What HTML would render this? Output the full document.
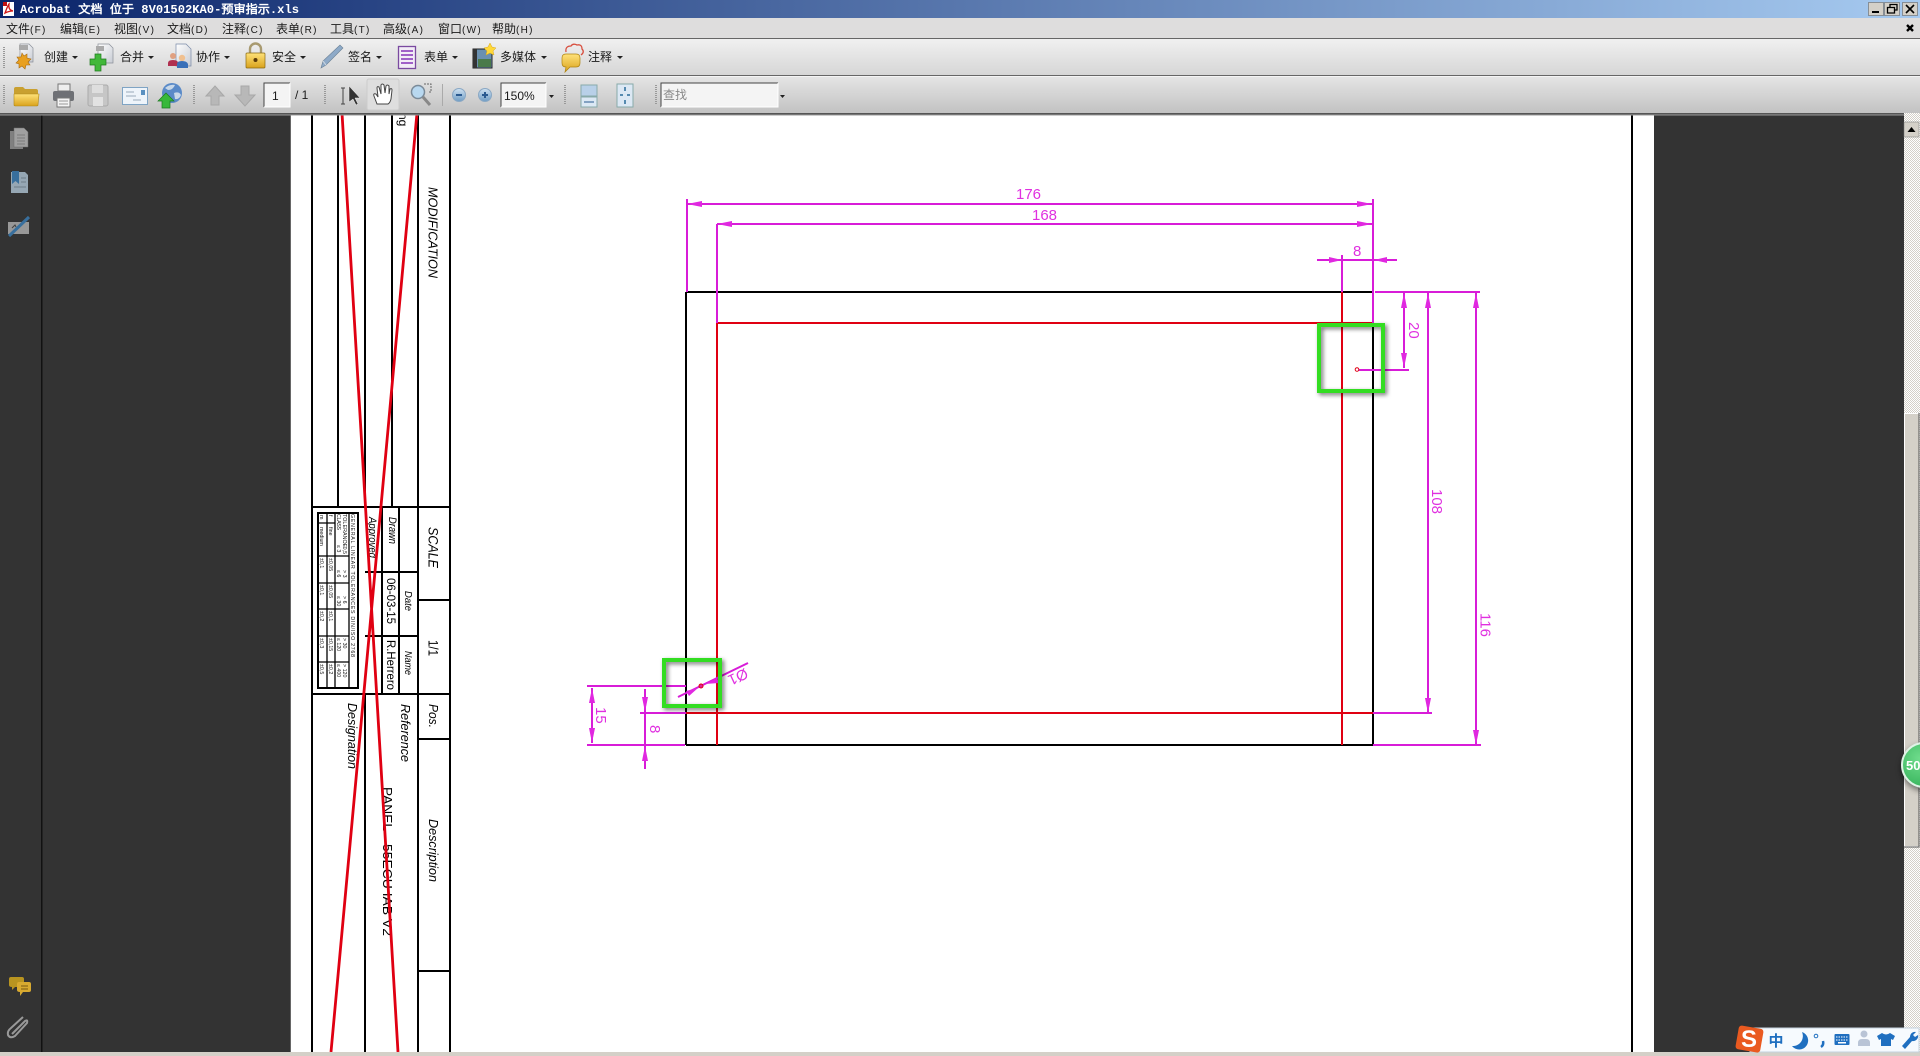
<!DOCTYPE html>
<html lang="zh"><head><meta charset="utf-8"><title>Acrobat</title>
<style>
html,body{margin:0;padding:0;background:#333;overflow:hidden;width:1920px;height:1056px}
svg{display:block;position:absolute;left:0;top:0;filter:blur(.35px)}
.ui{font-family:"Liberation Sans","WenQuanYi Zen Hei","Noto Sans CJK SC",sans-serif;font-size:12px;fill:#1a1a1a}
.ui tspan{font-size:10px;letter-spacing:1.300px}
.d{font-family:"Liberation Sans",sans-serif;fill:#000}
.i{font-style:italic}
.m{font-family:"Liberation Sans",sans-serif;font-size:15px;fill:#e030e0}
.t{font-family:"Liberation Sans",sans-serif;font-size:5.3px;fill:#111}
.gr{stroke:#999;stroke-width:2;stroke-dasharray:1 1}
</style></head><body>
<svg width="1920" height="1056" viewBox="0 0 1920 1056" xmlns="http://www.w3.org/2000/svg">
<defs>
<linearGradient id="tb"><stop offset="0" stop-color="#0a246a"/><stop offset="1" stop-color="#a6caf0"/></linearGradient>
<linearGradient id="t1" x1="0" y1="0" x2="0" y2="1"><stop offset="0" stop-color="#f0f0f0"/><stop offset="1" stop-color="#d6d6d6"/></linearGradient>
<linearGradient id="t2" x1="0" y1="0" x2="0" y2="1"><stop offset="0" stop-color="#e4e4e4"/><stop offset="1" stop-color="#c2c2c2"/></linearGradient>
<linearGradient id="gold" x1="0" y1="0" x2="0" y2="1"><stop offset="0" stop-color="#ffe27a"/><stop offset="1" stop-color="#d9a21c"/></linearGradient>
<linearGradient id="blu" x1="0" y1="0" x2="0" y2="1"><stop offset="0" stop-color="#cfe2f2"/><stop offset="1" stop-color="#6f9cc4"/></linearGradient>
<linearGradient id="page" x1="0" y1="0" x2="1" y2="1"><stop offset="0" stop-color="#fff"/><stop offset="1" stop-color="#c8ccd4"/></linearGradient>
<radialGradient id="ball" cx=".4" cy=".35" r=".8"><stop offset="0" stop-color="#6fdc8c"/><stop offset="1" stop-color="#2fae55"/></radialGradient>
<pattern id="chk" width="2" height="2" patternUnits="userSpaceOnUse"><rect width="2" height="2" fill="#fff"/><rect width="1" height="1" fill="#d4d0c8"/><rect x="1" y="1" width="1" height="1" fill="#d4d0c8"/></pattern>
</defs>

<!-- backgrounds -->
<rect width="1920" height="1056" fill="#333"/>
<rect x="41" y="115" width="1.5" height="937" fill="#111"/>
<rect x="290" y="113" width="1" height="939" fill="#666"/>
<rect x="291" y="113" width="1363" height="939" fill="#fff"/>

<!-- title block lines -->
<g stroke="#000" stroke-width="2" fill="none">
<path d="M312 113V1052M338 113V507M365 113V507M392 113V507M418 113V1052M450 113V1052M365 694V1052M382 507V694M399 507V694"/>
<path d="M312 507H450M312 694H450M365 572H418M365 636H418M418 600H450M418 739H450M418 971H450"/>
<path d="M1632 113V1052"/>
<!-- tolerance table -->
<rect x="318" y="513" width="40" height="175"/>
<path stroke-width="1.3" d="M327 513V688M335 513V688M349 513V688M318 556H349M318 583H349M318 609H349M318 636H349M318 662H349M318 523H335"/>
</g>
<g class="t">
<text transform="translate(351 514) rotate(90)" textLength="143">GENERAL LINEAR TOLERANCES DIN/ISO 2768</text>
<text transform="translate(343 514) rotate(90)" textLength="33">TOLERANCE</text>
<text transform="translate(337 514) rotate(90)" textLength="16">CLASS</text>
<text transform="translate(329 515) rotate(90)">f</text><text transform="translate(329 527) rotate(90)">fine</text>
<text transform="translate(320 515) rotate(90)">m</text><text transform="translate(320 527) rotate(90)">medium</text>
<text transform="translate(343 542) rotate(90)">&gt; 0,5</text><text transform="translate(337 545) rotate(90)">≤ 3</text>
<text transform="translate(343 570) rotate(90)">&gt; 3</text><text transform="translate(337 570) rotate(90)">≤ 6</text>
<text transform="translate(343 596) rotate(90)">&gt; 6</text><text transform="translate(337 596) rotate(90)">≤ 30</text>
<text transform="translate(343 638) rotate(90)">&gt; 30</text><text transform="translate(337 638) rotate(90)">≤ 120</text>
<text transform="translate(343 664) rotate(90)">&gt; 120</text><text transform="translate(337 664) rotate(90)">≤ 400</text>
<text transform="translate(329 558) rotate(90)">±0,05</text><text transform="translate(320 558) rotate(90)">±0,1</text>
<text transform="translate(329 585) rotate(90)">±0,05</text><text transform="translate(320 585) rotate(90)">±0,1</text>
<text transform="translate(329 611) rotate(90)">±0,1</text><text transform="translate(320 611) rotate(90)">±0,2</text>
<text transform="translate(329 638) rotate(90)">±0,15</text><text transform="translate(320 638) rotate(90)">±0,3</text>
<text transform="translate(329 664) rotate(90)">±0,2</text><text transform="translate(320 664) rotate(90)">±0,5</text>
</g>
<g class="d" font-size="12.5">
<text class="i" transform="translate(428.5 187) rotate(90)" textLength="91" lengthAdjust="spacingAndGlyphs">MODIFICATION</text>
<text transform="translate(399 113) rotate(90)" font-size="12">ng</text>
<text class="i" transform="translate(428.5 527) rotate(90)" font-size="13.5" textLength="41" lengthAdjust="spacingAndGlyphs">SCALE</text>
<text transform="translate(428.5 640) rotate(90)" font-size="13.5" textLength="16" lengthAdjust="spacingAndGlyphs">1/1</text>
<text class="i" transform="translate(429 704) rotate(90)" textLength="24" lengthAdjust="spacingAndGlyphs">Pos.</text>
<text class="i" transform="translate(429 819) rotate(90)" textLength="63" lengthAdjust="spacingAndGlyphs">Description</text>
<text class="i" transform="translate(389 517) rotate(90)" font-size="11" textLength="27" lengthAdjust="spacingAndGlyphs">Drawn</text>
<text class="i" transform="translate(369 517) rotate(90)" font-size="11" textLength="41" lengthAdjust="spacingAndGlyphs">Approved</text>
<text transform="translate(387 578) rotate(90)" font-size="12" textLength="46" lengthAdjust="spacingAndGlyphs">06-03-15</text>
<text class="i" transform="translate(405 591) rotate(90)" font-size="10" textLength="20" lengthAdjust="spacingAndGlyphs">Date</text>
<text transform="translate(387 640) rotate(90)" font-size="12" textLength="50" lengthAdjust="spacingAndGlyphs">R.Herrero</text>
<text class="i" transform="translate(405 651) rotate(90)" font-size="10" textLength="24" lengthAdjust="spacingAndGlyphs">Name</text>
<text class="i" transform="translate(401 704) rotate(90)" textLength="58" lengthAdjust="spacingAndGlyphs">Reference</text>
<text class="i" transform="translate(348 703) rotate(90)" textLength="66" lengthAdjust="spacingAndGlyphs">Designation</text>
<text transform="translate(383 787) rotate(90)" font-size="13" textLength="44" lengthAdjust="spacingAndGlyphs">PANEL</text>
<text transform="translate(383 844) rotate(90)" font-size="13" textLength="92" lengthAdjust="spacingAndGlyphs">55ECU IAB V2</text>
</g>
<!-- red cross -->
<path d="M342 113L398 1052M417 113L331 1052" stroke="#e00012" stroke-width="2.8" fill="none"/>

<!-- drawing -->
<g fill="none" stroke-width="2">
<path stroke="#000" d="M686 292V745M686 292H1373M686 745H1373M1373 323V745"/>
<path stroke="#e00012" d="M717 323V745M1342 292V745M717 323H1373M686 713H1373"/>
<path stroke="#d81cd8" d="M687 199V292M717 224V323M1373 199V323M1342 275V292M687 204H1372M717 224H1372M1317 260H1397M1342 255V292M1375 292H1480M1358 370H1409M1404 293V368M1373 713H1432M1428 293V713M1373 745H1481M1476 293V745M587 686H686M640 713H686M587 745H685M592 688V743M645 689V769M678 697L748 663"/>
</g>
<g fill="#e028e0">
<polygon points="687,204 702,201 702,207"/><polygon points="1372,204 1357,201 1357,207"/>
<polygon points="717,224 732,221 732,227"/><polygon points="1372,224 1357,221 1357,227"/>
<polygon points="1342,260 1329,257 1329,263"/><polygon points="1374,260 1387,257 1387,263"/>
<polygon points="1404,293 1401,308 1407,308"/><polygon points="1404,368 1401,353 1407,353"/>
<polygon points="1428,293 1425,308 1431,308"/><polygon points="1428,713 1425,698 1431,698"/>
<polygon points="1476,293 1473,308 1479,308"/><polygon points="1476,745 1473,730 1479,730"/>
<polygon points="592,688 589,703 595,703"/><polygon points="592,743 589,728 595,728"/>
<polygon points="645,712 642,697 648,697"/><polygon points="645,746 642,761 648,761"/>
<polygon points="698,688 686,691 689,696"/><polygon points="705,684 717,678 719,683"/>
</g>
<circle cx="701" cy="686" r="2" fill="#e020a0" stroke="#e00012"/>
<circle cx="1357" cy="369.5" r="1.8" fill="#fff" stroke="#e00012"/>
<g style="filter:drop-shadow(2px 2px 2px rgba(0,0,0,.55))" fill="none" stroke="#33dd22" stroke-width="4">
<rect x="1319" y="325" width="64" height="66"/><rect x="664" y="660" width="56" height="46"/>
</g>
<g class="m">
<text x="1016" y="199">176</text><text x="1032" y="220">168</text><text x="1353" y="256">8</text>
<text transform="translate(1409 322) rotate(90)">20</text>
<text transform="translate(1432 489) rotate(90)">108</text>
<text transform="translate(1480.5 613) rotate(90)">116</text>
<text transform="translate(596 707) rotate(90)">15</text>
<text transform="translate(650 725) rotate(90)">8</text>
<text transform="translate(745 668) rotate(155)" font-size="15">Ø1</text>
</g>

<!-- scrollbar -->
<rect x="1904" y="113" width="16" height="943" fill="url(#chk)"/>
<rect x="1904" y="122" width="15" height="15" fill="#d4d0c8" stroke="#777" stroke-width=".5"/>
<polygon points="1911.5,127 1907.5,132 1915.5,132" fill="#000"/>
<rect x="1904.5" y="413.5" width="14.5" height="433" fill="#d4d0c8" stroke="#fff"/>
<path d="M1919 413V847H1904" stroke="#555" fill="none"/>

<!-- bottom strip -->
<rect y="1052" width="1920" height="4" fill="#d4d0c8"/>

<!-- green ball -->
<circle cx="1924" cy="765" r="22" fill="url(#ball)" stroke="#dff3e6" stroke-width="2" style="filter:drop-shadow(0 3px 3px rgba(0,0,0,.45))"/>
<text x="1906" y="770" font-family="Liberation Sans,sans-serif" font-weight="bold" font-size="13" fill="#fff">50</text>

<!-- IME bar -->
<rect x="1750" y="1028" width="169" height="24" fill="#f6fafe" stroke="#c4d2de"/>
<g transform="rotate(10 1749 1039)"><rect x="1737" y="1027" width="25" height="24" rx="3" fill="#ea5a20"/></g>
<text x="1749" y="1047" text-anchor="middle" font-family="Liberation Sans,sans-serif" font-weight="bold" font-size="24" fill="#fff">S</text>
<text x="1776" y="1046" text-anchor="middle" font-family="WenQuanYi Zen Hei,Noto Sans CJK SC,sans-serif" font-weight="bold" font-size="15" fill="#1f6fc0">中</text>
<path d="M1802 1032A9 9 0 1 1 1792 1046A10 10 0 0 0 1802 1032Z" fill="#1f6fc0"/>
<circle cx="1816" cy="1036" r="1.8" fill="none" stroke="#1f6fc0"/><path d="M1823 1041q1 4-2 6" stroke="#1f6fc0" stroke-width="2.5" fill="none"/>
<rect x="1834.5" y="1034" width="15" height="11" rx="1" fill="#1f6fc0"/><path d="M1836 1037h12M1836 1040h12" stroke="#fff" stroke-dasharray="1.5 1"/><rect x="1838" y="1042" width="8" height="1.5" fill="#fff"/>
<circle cx="1864" cy="1034" r="3.5" fill="#b9c4d6"/><path d="M1858 1046v-3q0-4 4-4h4q4 0 4 4v3z" fill="#b9c4d6"/>
<path d="M1882 1033l-5 3 2 4 2-1v7h10v-7l2 1 2-4-5-3q-4 3-8 0z" fill="#1f6fc0"/>
<path d="M1902 1046l8-9a5 5 0 0 1 6-5l-3 3 2 2 3-2a5 5 0 0 1-6 6l-7 8z" fill="#1f6fc0"/>

<!-- title bar -->
<rect width="1920" height="18" fill="url(#tb)"/>
<rect x="3" y="2" width="11" height="14" fill="#fff"/><path d="M5 13q3-8 4-9q-1 6 4 7q-4 0-8 2z" fill="none" stroke="#d01818" stroke-width="1.3"/><rect x="3" y="2" width="4" height="4" fill="#c01010"/>
<text x="20" y="13" font-family="'Liberation Mono','WenQuanYi Zen Hei',monospace" font-weight="bold" font-size="11.5" fill="#fff" textLength="279" lengthAdjust="spacingAndGlyphs">Acrobat 文档 位于 8V01502KA0-预审指示.xls</text>
<g fill="#d4d0c8" stroke="#666" stroke-width=".6"><rect x="1868.5" y="2.5" width="15" height="13"/><rect x="1884.5" y="2.5" width="15" height="13"/><rect x="1902.5" y="2.5" width="15" height="13"/></g>
<rect x="1872" y="11" width="7" height="2" fill="#000"/>
<path d="M1890 7V4.5h7V10h-2M1887.5 7.5h7V13h-7z" fill="none" stroke="#000" stroke-width="1.3"/>
<path d="M1906 5L1914 13M1914 5L1906 13" stroke="#000" stroke-width="1.6"/>

<!-- menu -->
<rect y="18" width="1920" height="20" fill="#dedddd"/>
<rect y="38" width="1920" height="1" fill="#666"/>
<g class="ui">
<text x="6" y="33">文件<tspan>(F)</tspan></text>
<text x="60" y="33">编辑<tspan>(E)</tspan></text>
<text x="114" y="33">视图<tspan>(V)</tspan></text>
<text x="167" y="33">文档<tspan>(D)</tspan></text>
<text x="222" y="33">注释<tspan>(C)</tspan></text>
<text x="276" y="33">表单<tspan>(R)</tspan></text>
<text x="330" y="33">工具<tspan>(T)</tspan></text>
<text x="383" y="33">高级<tspan>(A)</tspan></text>
<text x="438" y="33">窗口<tspan>(W)</tspan></text>
<text x="492" y="33">帮助<tspan>(H)</tspan></text>
</g>
<path d="M1907 25L1913 31M1913 25L1907 31" stroke="#000" stroke-width="2.4"/>

<!-- toolbar 1 -->
<rect y="39" width="1920" height="36" fill="url(#t1)"/>
<rect y="75" width="1920" height="1" fill="#666"/><rect y="76" width="1920" height="1" fill="#f4f4f4"/>
<path class="gr" d="M4 47V69"/>
<g class="ui">
<text x="44" y="61">创建</text><text x="120" y="61">合并</text><text x="196" y="61">协作</text><text x="272" y="61">安全</text><text x="348" y="61">签名</text><text x="424" y="61">表单</text><text x="500" y="61">多媒体</text><text x="588" y="61">注释</text>
</g>
<g fill="#222">
<polygon points="72,56 78,56 75,59"/><polygon points="148,56 154,56 151,59"/><polygon points="224,56 230,56 227,59"/><polygon points="300,56 306,56 303,59"/><polygon points="376,56 382,56 379,59"/><polygon points="452,56 458,56 455,59"/><polygon points="541,56 547,56 544,59"/><polygon points="617,56 623,56 620,59"/>
</g>
<!-- create -->
<path d="M20 44h9l4 4v14H20z" fill="url(#page)" stroke="#8a8f98" stroke-width=".7"/><rect x="19" y="45" width="9" height="5" fill="#aaa"/>
<path d="M22 53l2 3 3-2 0 4 4 1-3 3 2 3-4 0-1 4-3-3-3 2 0-4-3-1 3-3-2-3 4 0z" fill="#e8a020" stroke="#a86a10" stroke-width=".6"/>
<!-- combine -->
<path d="M98 44h11l4 4v15H98z" fill="url(#page)" stroke="#8a8f98" stroke-width=".7"/><rect x="96" y="46" width="8" height="5" fill="#aaa"/>
<path d="M95 54h6v5h5v6h-5v6h-6v-6h-5v-6h5z" fill="#42b83a" stroke="#1e7a1e" stroke-width=".7"/>
<!-- collab -->
<path d="M176 44h10l5 5v17h-15z" fill="url(#page)" stroke="#7a8aa8" stroke-width=".7"/>
<circle cx="173" cy="56" r="3" fill="#e0a080"/><path d="M168 66v-3q0-3 5-3t5 3v3z" fill="#b03050"/>
<circle cx="182" cy="58" r="3.2" fill="#f0c090"/><path d="M177 68v-4q0-3 5-3t6 3v4z" fill="#3a70b8"/>
<!-- lock -->
<path d="M250 53v-4a5.500 5.500 0 0 1 11 0v4" fill="none" stroke="#a89a70" stroke-width="2.4"/><rect x="246" y="53" width="19" height="15" rx="1" fill="url(#gold)" stroke="#8a6a10" stroke-width=".7"/><circle cx="255.500" cy="60" r="2" fill="#5a3a08"/>
<!-- pen -->
<path d="M321 68l2-7 17-16 3 3-17 17z" fill="#8eaac8" stroke="#6a8095" stroke-width=".6"/><path d="M323 61l3 4" stroke="#cfd8e0"/>
<!-- form -->
<rect x="398.500" y="46.500" width="17" height="22" fill="#f2ecf6" stroke="#7a4aa0" stroke-width="1.300"/><path d="M401 51h12M401 55h12M401 59h12M401 63h12" stroke="#a060c8" stroke-width="2"/>
<!-- multimedia -->
<rect x="473" y="49" width="19" height="19" fill="#6a90b0" stroke="#222" stroke-width="1"/><rect x="473" y="49" width="4" height="19" fill="#333"/><rect x="478" y="59" width="13" height="8" fill="#4a7a4a"/>
<path d="M490 43l2 4 4 1-3 3 1 4-4-2-4 2 1-4-3-3 4-1z" fill="#ffd83a" stroke="#d8a818" stroke-width=".5"/>
<!-- comment -->
<path d="M562 58q0-4 4-4h10q4 0 4 4v5q0 4-4 4h-6l-5 5 1-5q-4 0-4-4z" fill="url(#gold)" stroke="#b08410" stroke-width=".7"/>
<path d="M566 52q-1-6 5-6q2-3 6-1q5-1 5 4q3 3-1 6" fill="none" stroke="#d85040" stroke-width="1.300"/>

<!-- toolbar 2 -->
<rect y="77" width="1920" height="36" fill="url(#t2)"/>
<rect y="113" width="1904" height="1.500" fill="#555"/><rect y="114.500" width="1904" height="1" fill="#999"/>
<path class="gr" d="M4 85V105M194 85V105M325 85V105M565 85V105M656 85V105"/>
<!-- folder -->
<path d="M14 89q0-2 2-2h7l2 2h11q2 0 2 2v13q0 2-2 2H16q-2 0-2-2z" fill="#c9a030"/><path d="M14 94h25l-1 11q0 1-2 1H16q-2 0-2-1z" fill="url(#gold)" stroke="#b08818" stroke-width=".6"/>
<!-- printer -->
<rect x="58" y="84" width="12" height="7" fill="#eee" stroke="#777"/><rect x="53" y="91" width="21" height="10" rx="2" fill="#6e7075"/><rect x="57" y="98" width="13" height="9" fill="#f4f4f4" stroke="#777"/><path d="M59 101h9M59 104h9" stroke="#999"/>
<!-- save -->
<rect x="88" y="85" width="20" height="21" rx="2" fill="#c6c6c6" stroke="#aaa"/><rect x="92" y="85" width="11" height="8" fill="#dedede"/><rect x="93" y="97" width="10" height="9" fill="#e2e2e2"/>
<!-- mail -->
<rect x="122.500" y="87.500" width="25" height="17" fill="#eef4fa" stroke="#7fa4c4"/><rect x="141" y="90" width="4" height="5" fill="#5a90c0"/><path d="M126 92h8M126 96h10M133 100h8" stroke="#9ab"/>
<!-- globe -->
<circle cx="172" cy="93" r="10" fill="#5a8ac8"/><path d="M165 88q5-4 10-3q-2 5-7 5zM174 93q5-2 7 2q-2 5-6 4z" fill="#c8d8e8"/><path d="M166 93l8 8h-4v7h-8v-7h-4z" fill="#38b83a" stroke="#1a7a1e" stroke-width=".7"/>
<!-- up/down -->
<path d="M215 86l9 10h-5v9h-8v-9h-5z" fill="#b8b8b8" stroke="#a8a8a8"/>
<path d="M241 86h8v9h6l-10 11-10-11h6z" fill="#b8b8b8" stroke="#a8a8a8"/>
<!-- page input -->
<rect x="264" y="83" width="26" height="24" fill="#f4f4f4"/><path d="M264 107V83H290" stroke="#444" fill="none"/><path d="M290 83V107H264" stroke="#fff" fill="none"/>
<text x="272" y="100" class="ui" font-size="13">1</text>
<text x="295" y="99" class="ui">/ 1</text>
<!-- select -->
<path d="M341 88h4M343 88v16M341 104h4" stroke="#444"/><path d="M349 86v16l4-3 3 6 2-1-3-6 5 0z" fill="#333" stroke="#eee" stroke-width=".5"/>
<!-- hand -->
<rect x="367" y="79" width="32" height="31" rx="2" fill="#dedede" stroke="#ccc"/>
<path d="M377 104l-3-8q-1-3 2-2l2 3-1-9q0-2 2-1l2 7V85q1-2 3 0l1 8 1-7q1-2 3 0v8l1-5q2-1 2 1l-1 9q-1 4-3 5z" fill="#fff" stroke="#444" stroke-width="1"/>
<!-- zoom -->
<path d="M424 84h7v8h-3" fill="none" stroke="#666" stroke-dasharray="2 1"/><circle cx="418" cy="92" r="6.500" fill="#b8d8f0" stroke="#7a8a98" stroke-width="1.500"/><path d="M423 97l7 8" stroke="#888" stroke-width="3"/>
<rect x="442" y="84" width="1" height="22" fill="#aaa"/>
<circle cx="459" cy="95" r="6.500" fill="url(#blu)" stroke="#8aa8c4"/><rect x="456" y="94" width="6" height="2" fill="#2a5a90"/>
<circle cx="485" cy="95" r="6.500" fill="url(#blu)" stroke="#8aa8c4"/><path d="M482 95h6M485 92v6" stroke="#2a5a90" stroke-width="2"/>
<rect x="501" y="83" width="45" height="24" fill="#f4f4f4"/><path d="M501 107V83H546" stroke="#444" fill="none"/><path d="M546 83V107H501" stroke="#fff" fill="none"/>
<text x="504" y="100" class="ui">150%</text>
<polygon points="549,95 554,95 551.500,98" fill="#222"/>
<!-- fit -->
<rect x="581" y="85" width="16" height="11" fill="#b8d0e8" stroke="#8aa"/><rect x="581" y="97" width="16" height="10" fill="#dce8f4" stroke="#8aa"/><path d="M584 102h10" stroke="#2a5a90"/>
<rect x="617" y="84" width="16" height="23" fill="#dce8f4" stroke="#8aa"/><path d="M625 87v4M625 100v4M620 95h3M627 95h3" stroke="#2a6a9a" stroke-width="1.500"/>
<!-- search -->
<rect x="661" y="83" width="117" height="24" fill="#f4f4f4"/><path d="M661 107V83H778" stroke="#444" fill="none"/><path d="M778 83V107H661" stroke="#fff" fill="none"/>
<text x="663" y="99" class="ui" style="fill:#888">查找</text>
<polygon points="780,95 785,95 782.500,98" fill="#222"/>

<!-- side icons -->
<g opacity=".85">
<rect x="10" y="131" width="13" height="18" fill="#8e8e8e"/><path d="M14 128h10l4 4v15H14z" fill="#b4b4b4" stroke="#777" stroke-width=".5"/><path d="M17 135h8M17 138h8M17 141h8M17 144h8" stroke="#888"/>
<path d="M11 172h14l3 3v18H11z" fill="#a8bccb"/><path d="M12 171h7v13l-3.500-3-3.500 3z" fill="#3a7ab0"/><path d="M21 178h5M21 182h5M14 187h12" stroke="#7a8a98"/>
<rect x="8" y="222" width="21" height="12" fill="#aaa"/><path d="M12 228l3-3 1 2" stroke="#444" fill="none"/><path d="M9 236l20-19" stroke="#3a7ab0" stroke-width="3"/>
</g>
<path d="M9 979q0-2 2-2h11q2 0 2 2v6q0 2-2 2h-7l-3 3v-3q-3 0-3-2z" fill="#b89420"/>
<path d="M17 984q0-2 2-2h10q2 0 2 2v6q0 2-2 2h-6l-3 4v-4q-3 0-3-2z" fill="#d8aa30"/><path d="M21 986h7M21 989h7" stroke="#7a5a10"/>
<path d="M13 1035l13-13q3-2 2 2l-12 13q-5 3-7-1-1-4 3-7l12-11" fill="none" stroke="#999" stroke-width="2" transform="translate(-1 -1)"/>
</svg>
</body></html>
